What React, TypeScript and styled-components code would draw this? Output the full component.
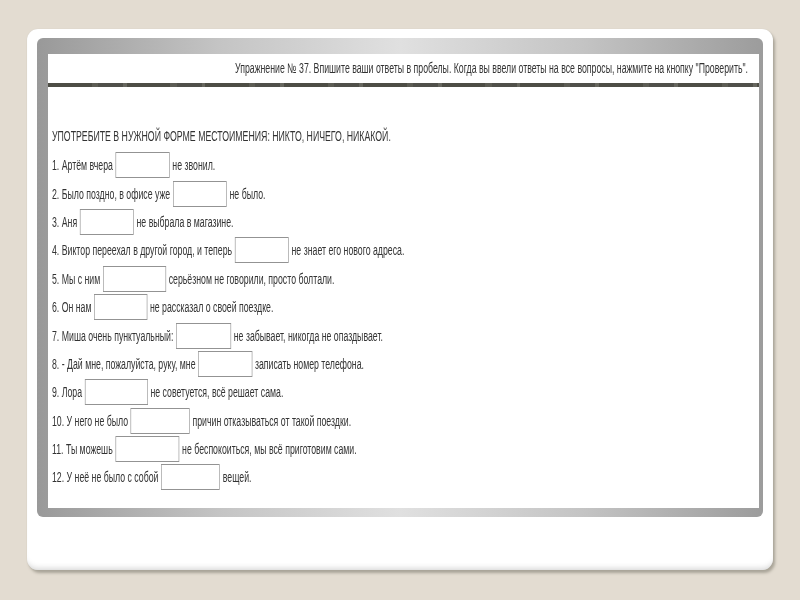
import styled, { createGlobalStyle } from 'styled-components';

// the reference is a squeezed screenshot, so the sheet is laid out wide and scaled down
const SQUEEZE = 0.625;

const GlobalStyle = createGlobalStyle`
  html, body {
    margin: 0;
    padding: 0;
    background: #e3dcd1;
  }
`;

const Page = styled.div`
  width: 800px;
  height: 600px;
  box-sizing: border-box;
  padding: 29px 27px 30px;
  overflow: hidden;
`;

const Card = styled.div`
  height: 541px;
  box-sizing: border-box;
  padding: 9px 10px 0;
  background: #fff;
  border-radius: 11px;
  box-shadow: 2px 3px 3px #a9a498, inset 0 -6px 6px -5px #cfcfcf, 0 0 1px #c9c4ba;
`;

const Frame = styled.div`
  height: 479px;
  box-sizing: border-box;
  padding: 16px 4px 9px 11px;
  border-radius: 6px;
  background: linear-gradient(90deg, #999 0%, #c4c4c4 25%, #e0e0e0 50%, #c4c4c4 75%, #9c9c9c 100%);
`;

const Sheet = styled.div`
  height: 100%;
  background: #fff;
  overflow: hidden;
`;

const Squeezed = styled.div`
  width: ${711 / SQUEEZE}px;
  height: 100%;
  transform: scaleX(${SQUEEZE});
  transform-origin: left top;
  color: #333;
  font-family: 'Liberation Sans', Arial, sans-serif;
  font-size: 14px;
  filter: blur(0.4px);
`;

const Header = styled.div`
  height: 29px;
  box-sizing: border-box;
  padding: 0 ${11 / SQUEEZE}px 2px 0;
  display: flex;
  align-items: center;
  justify-content: flex-end;
  white-space: nowrap;
`;

const Rule = styled.div`
  height: 4px;
  background: repeating-linear-gradient(90deg, #4d4d45 0 70px, #5c5c54 70px 80px, #50504a 80px 120px, #66665e 120px 126px);
`;

const Heading = styled.div`
  height: 29px;
  box-sizing: border-box;
  margin: 35px 0 0 ${4 / SQUEEZE}px;
  padding-bottom: 2px;
  display: flex;
  align-items: center;
  white-space: nowrap;
`;

const Exercise = styled.div`
  padding-left: ${4 / SQUEEZE}px;
`;

const Row = styled.div`
  height: 28.4px;
  display: flex;
  align-items: center;
  gap: ${2.7 / SQUEEZE}px;
  white-space: nowrap;
`;

const Blank = styled.div<{ $width: number }>`
  width: ${({ $width }) => $width / SQUEEZE}px;
  height: 26px;
  box-sizing: border-box;
  border: solid #939393;
  border-width: 1px 1.6px;
  background: #fff;
  flex: none;
`;

const rows: { before: string; width: number; after: string }[] = [
  { before: '1. Артём вчера', width: 54, after: 'не звонил.' },
  { before: '2. Было поздно, в офисе уже', width: 54, after: 'не было.' },
  { before: '3. Аня', width: 54, after: 'не выбрала в магазине.' },
  { before: '4. Виктор переехал в другой город, и теперь', width: 54, after: 'не знает его нового адреса.' },
  { before: '5. Мы с ним', width: 63, after: 'серьёзном не говорили, просто болтали.' },
  { before: '6. Он нам', width: 53, after: 'не рассказал о своей поездке.' },
  { before: '7. Миша очень пунктуальный:', width: 55, after: 'не забывает, никогда не опаздывает.' },
  { before: '8. - Дай мне, пожалуйста, руку, мне', width: 54, after: 'записать номер телефона.' },
  { before: '9. Лора', width: 63, after: 'не советуется, всё решает сама.' },
  { before: '10. У него не было', width: 59, after: 'причин отказываться от такой поездки.' },
  { before: '11. Ты можешь', width: 64, after: 'не беспокоиться, мы всё приготовим сами.' },
  { before: '12. У неё не было с собой', width: 59, after: 'вещей.' },
];

export default function App() {
  return (
    <>
      <GlobalStyle />
      <Page>
        <Card>
          <Frame>
            <Sheet>
              <Squeezed>
                <Header>
                  Упражнение № 37. Впишите ваши ответы в пробелы. Когда вы ввели ответы на все вопросы, нажмите на кнопку "Проверить".
                </Header>
                <Rule />
                <Heading>УПОТРЕБИТЕ В НУЖНОЙ ФОРМЕ МЕСТОИМЕНИЯ: НИКТО, НИЧЕГО, НИКАКОЙ.</Heading>
                <Exercise>
                  {rows.map((row) => (
                    <Row key={row.before}>
                      <span>{row.before}</span>
                      <Blank $width={row.width} />
                      <span>{row.after}</span>
                    </Row>
                  ))}
                </Exercise>
              </Squeezed>
            </Sheet>
          </Frame>
        </Card>
      </Page>
    </>
  );
}
